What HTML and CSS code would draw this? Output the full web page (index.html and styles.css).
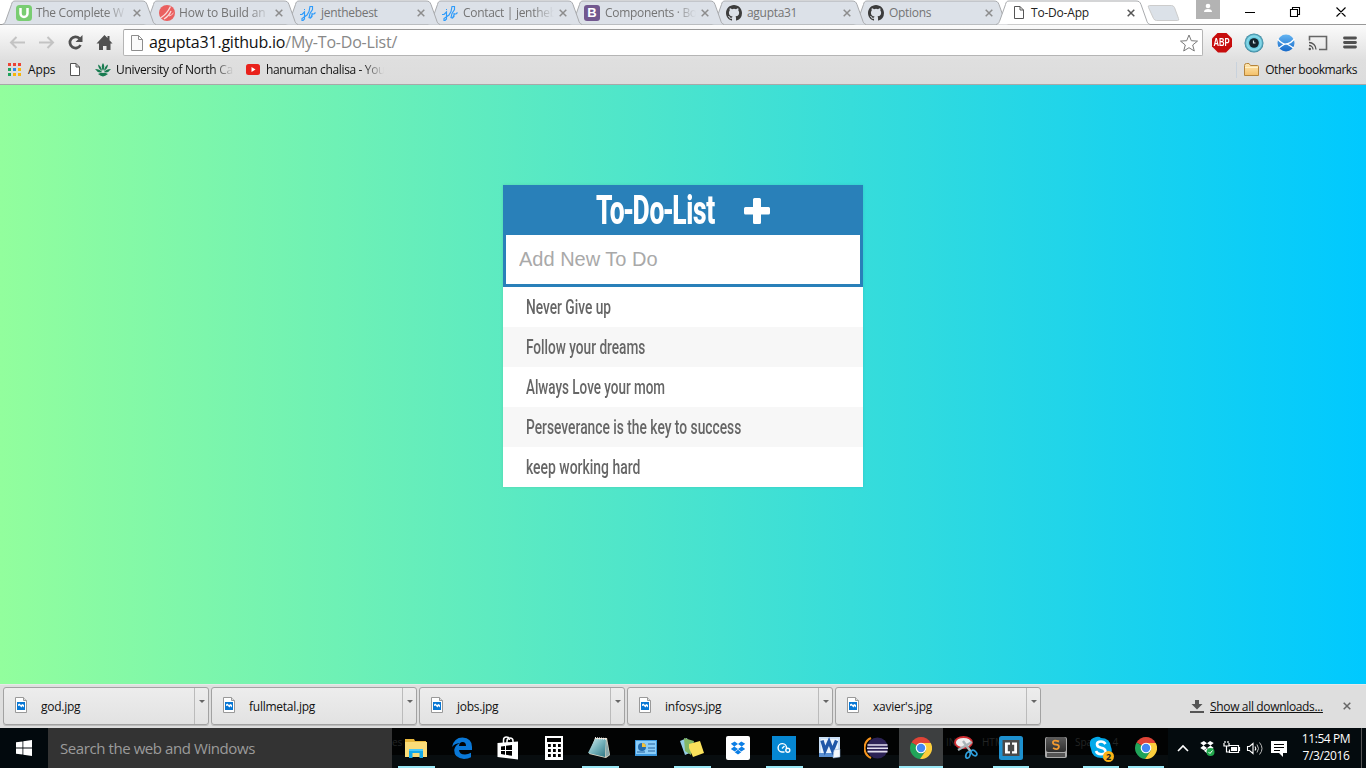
FILE: index.html
```html
<!DOCTYPE html>
<html lang="en">
<head>
<meta charset="utf-8">
<title>To-Do-App</title>
<link rel="stylesheet" href="styles.css">
</head>
<body>
<svg class="defs" width="0" height="0">
  <defs>
    <linearGradient id="folder" x2="0" y2="1"><stop stop-color="#ffe9b5"/><stop offset="1" stop-color="#f3bf68"/></linearGradient>
    <radialGradient id="eye"><stop offset=".3" stop-color="#14252e"/><stop offset=".5" stop-color="#5fc5dc"/><stop offset=".75" stop-color="#8adcec"/><stop offset="1" stop-color="#2c7b95"/></radialGradient>
    <linearGradient id="blue" x2="0" y2="1"><stop stop-color="#65b5f2"/><stop offset="1" stop-color="#1669c9"/></linearGradient>
    <linearGradient id="pad" x2="1" y2="1"><stop stop-color="#d4eff2"/><stop offset=".5" stop-color="#75b2bb"/><stop offset="1" stop-color="#2d7381"/></linearGradient>
    <linearGradient id="key" x2="0" y2="1"><stop stop-color="#5c5c5c"/><stop offset="1" stop-color="#2e2e2e"/></linearGradient>
    <symbol id="tab" viewBox="0 0 154 25"><path d="M0 24.5C3 24 3 22 4 20L9.500 4.500C10 2 11 1 13 1H140C143 1 144 2 145 4.500L150.500 20C151 22 152 24 154 24.500"/></symbol>
    <symbol id="x" viewBox="0 0 8 8"><path d="M.7.7l6.600 6.600M7.300.7L.7 7.300" fill="none" stroke="currentColor" stroke-width="1.500"/></symbol>
    <symbol id="page" viewBox="0 0 12 16"><path d="M1.500 1.500h5.500l3.500 3.500v8.500h-9zM7 1.500v3.500h3.500" fill="#fff" stroke="currentColor"/></symbol>
    <symbol id="jl" viewBox="0 0 16 16"><path d="M0 9.500h2l2.500-2.500v7l-1.500 1.500H2v-2l5-3.500 2-3.500 1-5h2.500v3L10 8.500 9 12.500l1.500.5 2-4M12 8v3.500l-1.500 1.500M12.500 9h1.500l1.500-1.500M4 4.500h1" fill="none" stroke="#2e9bfa" stroke-width="1.150"/></symbol>
    <symbol id="gh" viewBox="0 0 16 16"><path fill="#3c3c3c" d="M8 0C3.580 0 0 3.580 0 8c0 3.540 2.290 6.530 5.470 7.590.4.070.55-.17.55-.38v-1.490c-2.010.37-2.530-.49-2.690-.94-.09-.23-.48-.94-.82-1.130-.28-.15-.68-.52-.01-.53.63-.01 1.080.58 1.230.82.72 1.210 1.870.87 2.330.66.070-.52.28-.87.51-1.070-1.780-.2-3.640-.89-3.640-3.950 0-.87.31-1.590.82-2.150-.08-.2-.36-1.020.08-2.120 0 0 .67-.21 2.200.82a7.600 7.600 0 0 1 4 0c1.530-1.040 2.200-.82 2.200-.82.44 1.100.16 1.920.08 2.120.51.56.82 1.270.82 2.150 0 3.070-1.870 3.750-3.650 3.950.29.25.54.73.54 1.480v2.200c0 .21.15.46.55.38A8 8 0 0 0 16 8c0-4.420-3.580-8-8-8z"/></symbol>
    <symbol id="pic" viewBox="0 0 12 16"><path d="M.5.5h8l3 3v12H.5z" fill="#fff" stroke="#999"/><path d="M8.500.5v3h3" fill="#ddd" stroke="#999"/><path fill="#0877d4" d="M2 5h8v8H2z"/><path fill="#fff" d="M3 9V7.500L4.200 6.500 6 8l1.500-1L9 8v2.500L7.500 9 6.500 10.500 4.500 8.500z"/></symbol>
    <symbol id="box" viewBox="0 0 16 14"><path fill="currentColor" d="M4.500 0L8 2.700 4 5.300.3 2.500zM11.500 0L8 2.700l4 2.600 3.700-2.800zM.3 8L4 5.300 8 8l-3.500 2.700zM15.700 8L12 5.300 8 8l3.500 2.700zM8 8.800l3.500 2.600L8 14l-3.500-2.600z"/></symbol>
    <symbol id="chrome" viewBox="0 0 22 22"><path fill="#e04437" d="M1.500 5.500a11 11 0 0 1 19 0L11 11z"/><path fill="#21a45a" d="M1.500 5.500A11 11 0 0 0 10 22l6-8.500L11 11z"/><path fill="#fcce3c" d="M20.500 5.500A11 11 0 0 1 10 22l5.800-8.500L11 6h9.500z"/><circle cx="11" cy="11" r="5.300" fill="#fff"/><circle cx="11" cy="11" r="4.200" fill="#4388f4"/></symbol>
  </defs>
</svg>
<header class="chrome">
  <div class="strip">
    <div class="tab t1"><svg class="shape"><use href="#tab"/></svg><svg class="fav" viewBox="0 0 16 16"><rect width="16" height="16" rx="3.500" fill="#79cd72"/><path d="M4.500 3v5.500a3.500 3.500 0 0 0 7 0V3" fill="none" stroke="#fff" stroke-width="2.500"/></svg><span class="name fade">The Complete W</span><svg class="close"><use href="#x"/></svg></div>
    <div class="tab t2"><svg class="shape"><use href="#tab"/></svg><svg class="fav" viewBox="0 0 16 16"><circle cx="8" cy="8" r="8" fill="#ea5f5f"/><path d="M1.500 13Q8 9 11.500 1.500M5 14q5-3 7-8" fill="none" stroke="#f9dada" stroke-width="1.300"/><path d="M10 11q3-1 4.500-3" stroke="#f9dada" fill="none"/></svg><span class="name fade">How to Build an</span><svg class="close"><use href="#x"/></svg></div>
    <div class="tab t3"><svg class="shape"><use href="#tab"/></svg><svg class="fav"><use href="#jl"/></svg><span class="name">jenthebest</span><svg class="close"><use href="#x"/></svg></div>
    <div class="tab t4"><svg class="shape"><use href="#tab"/></svg><svg class="fav"><use href="#jl"/></svg><span class="name fade">Contact | jentheb</span><svg class="close"><use href="#x"/></svg></div>
    <div class="tab t5"><svg class="shape"><use href="#tab"/></svg><span class="fav bs">B</span><span class="name fade">Components · Bo</span><svg class="close"><use href="#x"/></svg></div>
    <div class="tab t6"><svg class="shape"><use href="#tab"/></svg><svg class="fav"><use href="#gh"/></svg><span class="name">agupta31</span><svg class="close"><use href="#x"/></svg></div>
    <div class="tab t7"><svg class="shape"><use href="#tab"/></svg><svg class="fav"><use href="#gh"/></svg><span class="name">Options</span><svg class="close"><use href="#x"/></svg></div>
    <div class="tab active"><svg class="shape"><use href="#tab"/></svg><svg class="fav pg"><use href="#page"/></svg><span class="name">To-Do-App</span><svg class="close"><use href="#x"/></svg></div>
    <svg class="newtab" viewBox="0 0 34 18"><path d="M3.500 1.500h22q2 0 3 2l4 11q1 2-1 2h-21q-2 0-3-2l-5-11q-1-2 1-2z" fill="#dbe1e8" stroke="#ccc"/></svg>
    <div class="win">
      <svg class="user" viewBox="0 0 24 19"><path fill="#b3b3b3" d="M0 0h24v19H0z"/><circle cx="12" cy="6" r="2.300" fill="#fff"/><path fill="#fff" d="M8 12q0-3 4-3t4 3z"/></svg>
      <svg class="ctl" viewBox="0 0 120 24"><path d="M9 12.500h10M54.500 9.500h7v7h-7zM56.500 9.500v-2h7v7h-2M100.500 7.500l9 9M109.500 7.500l-9 9" fill="none" stroke="#000" stroke-width="1.100"/></svg>
    </div>
  </div>
  <div class="toolbar">
    <svg class="nav" viewBox="0 0 118 28">
      <path d="M25 13.500H11M16.500 8L11 13.500l5.500 5.500M39 13.500h14M47.500 8l5.500 5.500-5.500 5.500" fill="none" stroke="#c3c3c3" stroke-width="2"/>
      <path d="M79.500 9.500a5.600 5.600 0 1 0 1 6.500" fill="none" stroke="#505050" stroke-width="2.700"/><path d="M82.500 6v7h-7z" fill="#505050"/>
      <path d="M96.500 14.500l8-8.500 3 3V7h2v4.200l3 3.300h-2V21h-4v-4h-3.500v4h-4v-6.500z" fill="#505050"/>
    </svg>
    <div class="omni">
      <svg class="opage" viewBox="0 0 12 16"><path d="M.5.500h7l4 4v11H.500zM7.500.500v4h4" fill="#fafafa" stroke="#8d8d8d"/></svg>
      <span class="url">agupta31.github.io<i>/My-To-Do-List/</i></span>
      <svg class="star" viewBox="0 0 18 18"><path d="M9 1l2.300 5.700 6.200.4-4.800 3.900 1.600 6L9 13.700 3.700 17l1.600-6L.5 7.100l6.200-.4z" fill="#fff" stroke="#7a7a7a"/></svg>
    </div>
    <div class="ext">
      <span class="abp"><b>ABP</b></span>
      <svg viewBox="0 0 20 20"><circle cx="10" cy="10" r="9.500" fill="url(#eye)"/><circle cx="10" cy="10" r="4.800" fill="#15232b"/><path d="M9.500 7.500v2.500h2" stroke="#d3e5ec" stroke-width="1.200" fill="none"/></svg>
      <svg viewBox="0 0 20 20"><circle cx="10" cy="10" r="8.500" fill="url(#blue)"/><path d="M1.500 6Q7 12 11 11T18.500 6M3 15q6-5 8-4t6.500 4" stroke="#fff" stroke-width="1.300" fill="none"/></svg>
      <svg viewBox="0 0 20 20"><path d="M1.500 7.500v-4h17v13H11" fill="none" stroke="#666" stroke-width="1.600"/><path d="M1 9.500a7 7 0 0 1 7 7M1 12.500a4 4 0 0 1 4 4" fill="none" stroke="#555" stroke-width="1.300"/><circle cx="1.800" cy="16" r="1.200" fill="#555"/></svg>
      <svg viewBox="0 0 20 20"><path d="M4.500 5h11M4.500 9.500h11M4.500 14h11" stroke="#505050" stroke-width="2.800" stroke-linecap="round"/></svg>
    </div>
  </div>
  <div class="marks">
    <svg class="apps" viewBox="0 0 13 13"><path fill="#ec4435" d="M0 0h3v3H0zM5 0h3v3H5zM10 0h3v3h-3z"/><path fill="#1fa25c" d="M0 5h3v3H0zM0 10h3v3H0z"/><path fill="#2d87e8" d="M5 5h3v3H5z"/><path fill="#f7b50b" d="M10 5h3v3h-3zM5 10h3v3H5zM10 10h3v3h-3z"/></svg>
    <span class="bm b1">Apps</span>
    <svg class="mpage"><use href="#page"/></svg>
    <svg class="unc" viewBox="0 0 16 14"><path fill="#187b50" d="M8 0q2.500 3 0 8-2.500-5 0-8zM3 1.500q3.500 1.500 4 6.500Q3.500 6 3 1.500zm10 0Q9.500 3 9 8q3.500-2 4-6.500zM0 6q5 0 7 3-4 1.500-7-3zm16 0q-5 0-7 3 4 1.500 7-3zM3 11q4-2 5-1 1-1 5 1-3 2-5 2.500-2-.5-5-2.500z"/></svg>
    <span class="bm b2">University of North Ca</span>
    <svg class="yt" viewBox="0 0 14 11"><rect width="14" height="11" rx="2.500" fill="#e9211b"/><path d="M5.500 3v5l4-2.500z" fill="#fff"/></svg>
    <span class="bm b3">hanuman chalisa - You</span>
    <i class="sep"></i>
    <svg class="fold" viewBox="0 0 15 13"><path d="M.5 12.500v-10q0-2 2-2h2.500l1.500 2h7q1 0 1 1v9z" fill="url(#folder)" stroke="#b6843b"/><path d="M1 4.500h13" stroke="#fff0c8"/></svg>
    <span class="bm b4">Other bookmarks</span>
  </div>
</header>
<main class="content">
  <section class="card">
    <h1><span class="ttl">To<i>-</i>Do<i>-</i>List</span><svg class="plus" viewBox="0 0 26 26"><path fill="#fff" d="M10.500 0h5q1.500 0 1.500 1.500V9h7.500q1.500 0 1.500 1.500v4.500q0 1.500-1.500 1.500H17V24.500q0 1.500-1.500 1.500h-5Q9 26 9 24.500v-8H1.500Q0 16.500 0 15v-4.500Q0 9 1.500 9H9V1.500Q9 0 10.500 0z"/></svg></h1>
    <input type="text" placeholder="Add New To Do">
    <ul>
      <li><span class="r1">Never Give up</span></li>
      <li><span class="r2">Follow your dreams</span></li>
      <li><span class="r3">Always Love your mom</span></li>
      <li><span class="r4">Perseverance is the key to success</span></li>
      <li><span class="r5">keep working hard</span></li>
    </ul>
  </section>
</main>
<section class="downloads">
  <div class="dl"><svg class="pic"><use href="#pic"/></svg><span>god.jpg</span><b><i></i></b></div>
  <div class="dl"><svg class="pic"><use href="#pic"/></svg><span>fullmetal.jpg</span><b><i></i></b></div>
  <div class="dl"><svg class="pic"><use href="#pic"/></svg><span>jobs.jpg</span><b><i></i></b></div>
  <div class="dl"><svg class="pic"><use href="#pic"/></svg><span>infosys.jpg</span><b><i></i></b></div>
  <div class="dl"><svg class="pic"><use href="#pic"/></svg><span>xavier's.jpg</span><b><i></i></b></div>
  <svg class="down" viewBox="0 0 14 13"><path fill="#555" d="M5 0h4v4h3.500L7 9.500 1.500 4H5zM0 11h14v2H0z"/></svg>
  <a class="all">Show all downloads...</a>
  <svg class="dclose"><use href="#x"/></svg>
</section>
<footer class="taskbar">
  <div class="start"><svg viewBox="0 0 16 16"><path fill="#fff" d="M0 2.300l6.500-.9v6.200H0zM7.300 1.300L16 0v7.600H7.300zM0 8.400h6.500v6.200L0 13.700zM7.300 8.400H16V16l-8.700-1.300z"/></svg></div>
  <div class="search">Search the web and Windows</div>
  <div class="slots">
    <div class="slot on"><span class="ghost g0">es</span><svg viewBox="0 0 24 24"><path fill="#e9b83c" d="M1 3h9l1 2h11v4H1z"/><path fill="#fbdc78" d="M1 6h22v15H1z"/><path fill="#13a9e9" d="M5 13h14v9h-3.500v-5h-7v5H5z"/><path fill="#4cc9f5" d="M5 13h14v2H5z"/></svg></div>
    <div class="slot"><svg viewBox="0 0 24 24"><path fill="#0a78d7" d="M2 11Q4 1.500 12.500 1.500 22 2 22 11v3H9q.5 4.500 6 4.500 3 0 6-1.700v4.500Q18 23 14 23 4 22 4.200 14 5 9 10 7 4.500 7.500 2 11zm7-1h7q0-4-3.500-4Q9.500 6 9 10z"/></svg></div>
    <div class="slot"><svg viewBox="0 0 24 24"><path d="M7.500 7V4q0-3 3-3t3 3M11 7V5q0-3 3-3t3 3v2" fill="none" stroke="#fff" stroke-width="1.500"/><path fill="#fff" d="M1.500 7L22 5.500v18L1.500 21z"/><path fill="#000" d="M5 10.500l4-.5v4H5zM10 9.800l6-.8v5h-6zM5 15h4v3.700L5 18zM10 15h6v4.800l-6-1z"/></svg></div>
    <div class="slot"><svg viewBox="0 0 24 24"><path fill="#fff" d="M3 0h18v24H3z"/><path d="M5 4h14" stroke="#000" stroke-width="4"/><path d="M6 9.500h13M6 14.500h13M6 19.500h13" stroke="#000" stroke-width="2.800" stroke-dasharray="2.800 2.200"/></svg></div>
    <div class="slot on"><svg viewBox="0 0 24 24"><path fill="#e8dfcb" d="M7 2h12l3 17-4 3L1 18z"/><path fill="url(#pad)" d="M7 3h11l-1 18L0 17z"/><path d="M7 2l12 1" stroke="#eee" stroke-width="2" stroke-dasharray="1 1"/><path fill="#8aa9ac" d="M18.500 3l3 16-4 2z"/></svg></div>
    <div class="slot"><svg viewBox="0 0 24 24"><path fill="#3c97dc" d="M1 4h22v16H1z"/><path fill="#8bcdf8" d="M2 5h20v13H2z"/><circle cx="8" cy="11" r="4" fill="#246cae"/><path d="M8 11V7a4 4 0 0 1 4 4z" fill="#f3c23b"/><path d="M14 8h7M14 12h7M14 15h7M3 16h8" stroke="#4a86bd" stroke-width="1.300"/></svg></div>
    <div class="slot on"><svg viewBox="0 0 24 24"><path fill="#95cde4" d="M0 5l7-3 5 14-7 3z"/><path fill="#83b866" d="M4 2l10 3-3 14-6-4z"/><path fill="#fae15b" d="M9 8l11-3 4 12-11 4-4-9z"/></svg></div>
    <div class="slot"><svg viewBox="0 0 24 24"><rect width="24" height="24" rx="2" fill="#fff"/><g color="#0b7ee5"><use href="#box" x="4.500" y="5" width="15" height="14"/></g></svg></div>
    <div class="slot on"><svg viewBox="0 0 24 24"><path fill="#0687d2" d="M0 0h24v24H0z"/><g fill="none" stroke="#fff" stroke-width="1.400"><path d="M12.500 16h-2.500a4.200 4.200 0 1 1 4.500-4"/><circle cx="15.800" cy="14.300" r="2"/><path d="M10 12.500l2.500-2.500"/></g></svg></div>
    <div class="slot"><svg viewBox="0 0 24 24"><path fill="#c9dff6" d="M1 1h21v20H1z"/><path fill="#eaf3fc" d="M3 3h17v15H3z"/><path fill="#5a8fd0" d="M1 17h15v4H1z"/><path d="M4 4.500l3 10 4-9 3.500 9 4-10" fill="none" stroke="#1f57a8" stroke-width="3.400"/><path fill="#f4f8fc" stroke="#87a9d0" stroke-width=".5" d="M16 14l6-1v8l-7 1z"/></svg></div>
    <div class="slot"><svg viewBox="0 0 24 24"><path d="M7 2a11 11 0 0 0 0 20" fill="none" stroke="#f7941e" stroke-width="2"/><circle cx="13.500" cy="12" r="10.500" fill="#2c2255"/><path d="M3.500 9h20M3 12.300h21M3.500 15.600h20" stroke="#e4e0ef" stroke-width="1.600"/></svg></div>
    <div class="slot s2 on hot"><svg class="sm"><use href="#chrome"/></svg></div>
    <div class="slot s2"><span class="ghost g1">INS</span><span class="ghost g2">HTML</span><svg viewBox="0 0 24 24"><ellipse cx="9.500" cy="6.500" rx="8.500" ry="5.500" fill="#eee" stroke="#d22d32" stroke-width="1.800"/><path d="M4 14L18 6M9 5l8 11" stroke="#aab4b8" stroke-width="2.400"/><g fill="none" stroke="#2e9edb" stroke-width="1.700"><ellipse cx="14" cy="19" rx="2" ry="3.300" transform="rotate(20 14 19)"/><ellipse cx="20" cy="17" rx="2" ry="3.300" transform="rotate(-50 20 17)"/></g></svg></div>
    <div class="slot s2 on"><svg viewBox="0 0 24 24"><rect width="24" height="24" rx="2.500" fill="#1e91cf"/><path fill="#4a4a4a" d="M3.500 4h17v16h-17z"/><path fill="#fff" d="M6 6.500h5v2.300H8.800v6.400H11v2.300H6zM18 6.500h-5v2.300h2.200v6.400H13v2.300h5z"/></svg></div>
    <div class="slot s2"><svg viewBox="0 0 24 24"><rect x="1" y="1" width="22" height="21" rx="2" fill="#aaa"/><rect x="2" y="1" width="20" height="15" rx="2" fill="url(#key)"/><path d="M15 5.500Q9.500 3.500 9 6t3 2.600 2.700 3-5.700.4" fill="none" stroke="#f39a30" stroke-width="1.900"/><path d="M3 19h18" stroke="#555" stroke-width="4"/></svg></div>
    <div class="slot s2 on"><span class="ghost g3">Spaces: 4</span><svg viewBox="0 0 24 24"><path fill="#03a9e9" d="M7 1q3-1 5 1 9 0 10 9 2 5-1 9-3 4-8 2Q3 22 2 13-2 3 7 1z"/><path d="M16.500 8Q15 5.500 12 5.500 8 5.500 8 8.300t4 3.400 4.500 3.500-4.500 3Q8 18 7 15" fill="none" stroke="#fff" stroke-width="2.600"/></svg><em>2</em></div>
    <div class="slot s2 on"><svg class="sm"><use href="#chrome"/></svg></div>
  </div>
  <div class="tray">
    <svg viewBox="0 0 130 24"><path d="M9 15l5-5 5 5" fill="none" stroke="#fff" stroke-width="1.600"/>
      <g color="#fff"><use href="#box" x="31" y="4.500" width="14" height="13"/></g><circle cx="41.500" cy="16" r="4" fill="#20a84b"/><path d="M39.500 16l1.500 1.500 2.500-3" fill="none" stroke="#fff"/>
      <path d="M59.500 9.500h10v7h-9v-3M70.500 11v4M55 7v3h5V7M56 7V5M59 7V5M57.500 10v6h3" fill="none" stroke="#fff" stroke-width="1.200"/><path fill="#fff" d="M62 11h6v4h-6z"/>
      <path d="M78.500 10.500h2l3.500-3v10l-3.500-3h-2zM86 10.500q1.500 2 0 4" fill="none" stroke="#fff" stroke-width="1.100"/><path d="M88 8.500q3 4 0 8M90.500 6.500q5 6 0 12" fill="none" stroke="#bbb"/>
      <path fill="#fff" d="M102 5h16v12h-4v4l-4-4h-8z"/><path d="M105 8.500h10M105 11.500h10M105 14.500h6" stroke="#000"/></svg>
    <div class="clock"><span>11:54 PM</span><span>7/3/2016</span></div>
    <div class="peek"></div>
  </div>
</footer>
</body>
</html>
```
FILE: styles.css
```css
* { box-sizing: border-box; }
body { margin: 0; width: 1366px; height: 768px; overflow: hidden; display: flex; flex-direction: column; font: 12px "Open Sans", "Noto Sans", sans-serif; color: #111; background: #dedede; }
svg { display: block; flex: none; }
.defs { position: absolute; }
.chrome { height: 85px; flex: none; background: linear-gradient(#fff 24px, #fbfbfb 25px, #dfdfdf 60px, #dcdcdc); border-bottom: 1px solid #a8a8a8; }
.strip { height: 25px; display: flex; position: relative; padding-left: 2px; border-bottom: 1px solid #999; background: #fff; }
.tab { position: relative; width: 142px; height: 25px; flex: none; display: flex; align-items: center; padding: 0 0 0 14px; color: #747474; }
.tab > * { position: relative; }
.tab .shape { position: absolute; left: 0; top: 0; width: 154px; height: 25px; fill: #dce1e8; stroke: #a9abae; }
.t1 { z-index: 8; } .t2 { z-index: 7; } .t3 { z-index: 6; } .t4 { z-index: 5; } .t5 { z-index: 4; } .t6 { z-index: 3; } .t7 { z-index: 2; }
.t2 { padding-left: 15px; }
.active { z-index: 9; color: #222; }
.tab.active .shape { fill: #fff; }
.fav { width: 16px; height: 16px; margin-top: 1px; }
.fav.pg { width: 12px; color: #555; margin: 1px 3px 0 3px; }
.bs { background: #72588f; border-radius: 3px; color: #fff; font: bold 13px/16px "Liberation Sans", sans-serif; text-align: center; }
.name { width: 92px; margin-left: 5px; white-space: nowrap; line-height: 18px; height: 18px; letter-spacing: -.3px; }
.t1 .name { margin-left: 4px; width: 93px; }
.t2 .name { letter-spacing: -.15px; margin-left: 4px; }
.fade { mask-image: linear-gradient(90deg, #000 70px, transparent 91px); }
.close { width: 8px; height: 8px; margin-left: 4px; color: #8c8c8c; margin-top: 1px; }
.active .close { color: #555; }
.active .name { margin-left: 3px; letter-spacing: -.2px; }
.newtab { width: 34px; height: 18px; margin: 4px 0 0 8px; }
.win { display: flex; margin-left: 16px; }
.user { width: 24px; height: 19px; }
.ctl { width: 120px; height: 24px; margin-left: 16px; }
.toolbar { height: 35px; display: flex; align-items: center; }
.nav { width: 123px; height: 28px; padding-right: 5px; }
.omni { width: 1080px; height: 27px; border: 1px solid #b5b5b5; border-top-color: #999; border-radius: 2px; background: #fff; display: flex; align-items: center; padding-left: 7px; }
.opage { width: 12px; height: 16px; }
.url { margin: -1px 0 0 6px; font-size: 16px; line-height: 24px; flex: 1; letter-spacing: -.21px; }
.url i { font-style: normal; color: #888; }
.star { width: 18px; height: 18px; margin-right: 4px; }
.ext { display: flex; margin-left: 9px; gap: 12px; align-items: center; }
.ext svg { width: 20px; height: 20px; }
.abp { width: 20px; height: 20px; background: #c70d0d; clip-path: polygon(30% 0, 70% 0, 100% 30%, 100% 70%, 70% 100%, 30% 100%, 0 70%, 0 30%); color: #fff; font: bold 10px/20px "Liberation Sans", sans-serif; display: flex; justify-content: center; }
.abp b { transform: scaleX(.76); }
.marks { height: 24px; display: flex; align-items: center; padding: 0 9px 3px 8px; margin-top: -1px; }
.apps { width: 13px; height: 13px; }
.bm { white-space: nowrap; line-height: 18px; letter-spacing: -.15px; margin-top: 1px; }
.b1 { margin-left: 7px; width: 41px; }
.mpage { width: 12px; height: 16px; color: #555; }
.unc { width: 16px; height: 14px; margin-left: 14px; }
.b2, .b3 { width: 118px; margin-left: 5px; mask-image: linear-gradient(90deg, #000 96px, transparent 118px); letter-spacing: -.3px; }
.b4 { letter-spacing: -.45px; }
.yt { width: 14px; height: 11px; margin-left: 12px; }
.b3 { margin-left: 6px; letter-spacing: -.36px; }
.sep { width: 1px; height: 16px; margin-left: auto; background: #c9d2dc; }
.fold { width: 15px; height: 13px; margin: 0 6px 0 7px; }
.content { height: 599px; flex: none; background: linear-gradient(to right, #92fe9d, #00c9ff); display: flex; justify-content: center; align-items: flex-start; padding-top: 100px; }
.card { width: 360px; height: 302px; background: #fff; box-shadow: 0 0 3px rgba(0,0,0,.1); }
h1 { margin: 0; height: 50px; background: #2980b9; color: #fff; display: flex; align-items: center; padding-left: 93px; }
.ttl { width: 151px; white-space: nowrap; font: 800 41px/48px Roboto, sans-serif; transform: scaleX(.645); transform-origin: left; letter-spacing: -.5px; }
.ttl i { font-style: normal; margin: 0 -2px; }
.plus { width: 26px; height: 26px; margin: 2px 0 0 -3px; }
input { display: block; width: 360px; height: 52px; border: 3px solid #2980b9; border-top: 0; padding: 0 13px; background: #fff; font: 20px "Liberation Sans", Arial, sans-serif; outline: 0; }
input::placeholder { color: #a9a9a9; opacity: 1; }
ul { list-style: none; margin: 0; padding: 0; }
li { height: 40px; padding-left: 23px; color: #666; font: 500 19.5px/41px Roboto, sans-serif; }
li:nth-child(even) { background: #f7f7f7; }
li span { display: inline-block; transform-origin: left; white-space: nowrap; }
.r1 { transform: scaleX(.704); }
.r2 { transform: scaleX(.699); }
.r3 { transform: scaleX(.69); }
.r4 { transform: scaleX(.707); }
.r5 { transform: scaleX(.714); }
.downloads { height: 44px; flex: none; display: flex; align-items: center; padding: 0 0 1px 3px; border-top: 1px solid #e8e8e8; background: #dedede; }
.dl { width: 206px; height: 38px; margin-right: 2px; flex: none; border: 1px solid #a2a2a2; border-radius: 3px; background: linear-gradient(#ededed, #e2e2e2); box-shadow: 0 1px 0 #bdbdbd; display: flex; align-items: center; padding-left: 11px; }
.pic { width: 12px; height: 16px; margin-bottom: 3px; }
.dl span { flex: 1; margin: 0 0 0 14px; letter-spacing: -.25px; }
.dl b { width: 14px; height: 36px; border-left: 1px solid #bbb; display: flex; justify-content: center; padding-top: 12px; }
.dl i { width: 0; height: 0; border: 3px solid transparent; border-top-color: #666; border-bottom: 0; }
.down { width: 14px; height: 13px; margin-left: 147px; }
.all { margin: 0 0 0 6px; width: 113px; text-decoration: underline; white-space: nowrap; letter-spacing: -.34px; }
.dclose { width: 8px; height: 8px; margin-left: 20px; color: #666; }
.taskbar { height: 40px; flex: none; display: flex; background: #030607; color: #fff; }
.start { width: 48px; display: flex; align-items: center; justify-content: center; background: #02090d; }
.start svg { width: 16px; height: 16px; }
.search { width: 344px; background: #333; color: #9b9b9b; font-size: 15px; line-height: 40px; padding-left: 12px; white-space: nowrap; letter-spacing: -.42px; }
.slots { display: flex; padding-left: 1px; background: linear-gradient(#020303 27px, #080d0f 27px); }
.slot { position: relative; width: 46px; height: 40px; display: flex; align-items: center; justify-content: center; }
.slot svg { position: relative; width: 24px; height: 24px; }
.slot .sm { width: 22px; height: 22px; }
.s2 { width: 45px; }
.on::after { content: ""; position: absolute; left: 5px; right: 4px; bottom: 0; height: 2px; background: #9ae8f6; }
.hot { width: 44px; background: #3d3f40; }
.hot::after { left: 0; right: 0; }
.ghost { position: absolute; top: 7px; color: #232525; font-size: 10px; line-height: 15px; white-space: nowrap; }
.g0 { left: -1px; } .g1 { left: 3px; } .g2 { left: 39px; } .g3 { left: -3px; }
.slot em { position: absolute; left: 25px; top: 23px; width: 11px; height: 11px; border-radius: 50%; background: #fcb316; color: #222; font: bold 9px/11px "Open Sans", sans-serif; text-align: center; }
.tray { display: flex; flex: 1; align-items: center; background: #040b0e; padding-left: 1px; }
.tray > svg { width: 130px; height: 24px; }
.clock { width: 54px; display: flex; flex-direction: column; align-items: center; line-height: 17px; margin-top: -2px; white-space: nowrap; letter-spacing: -.4px; }
.peek { width: 1px; height: 40px; margin-left: 8px; background: #555; }
```
